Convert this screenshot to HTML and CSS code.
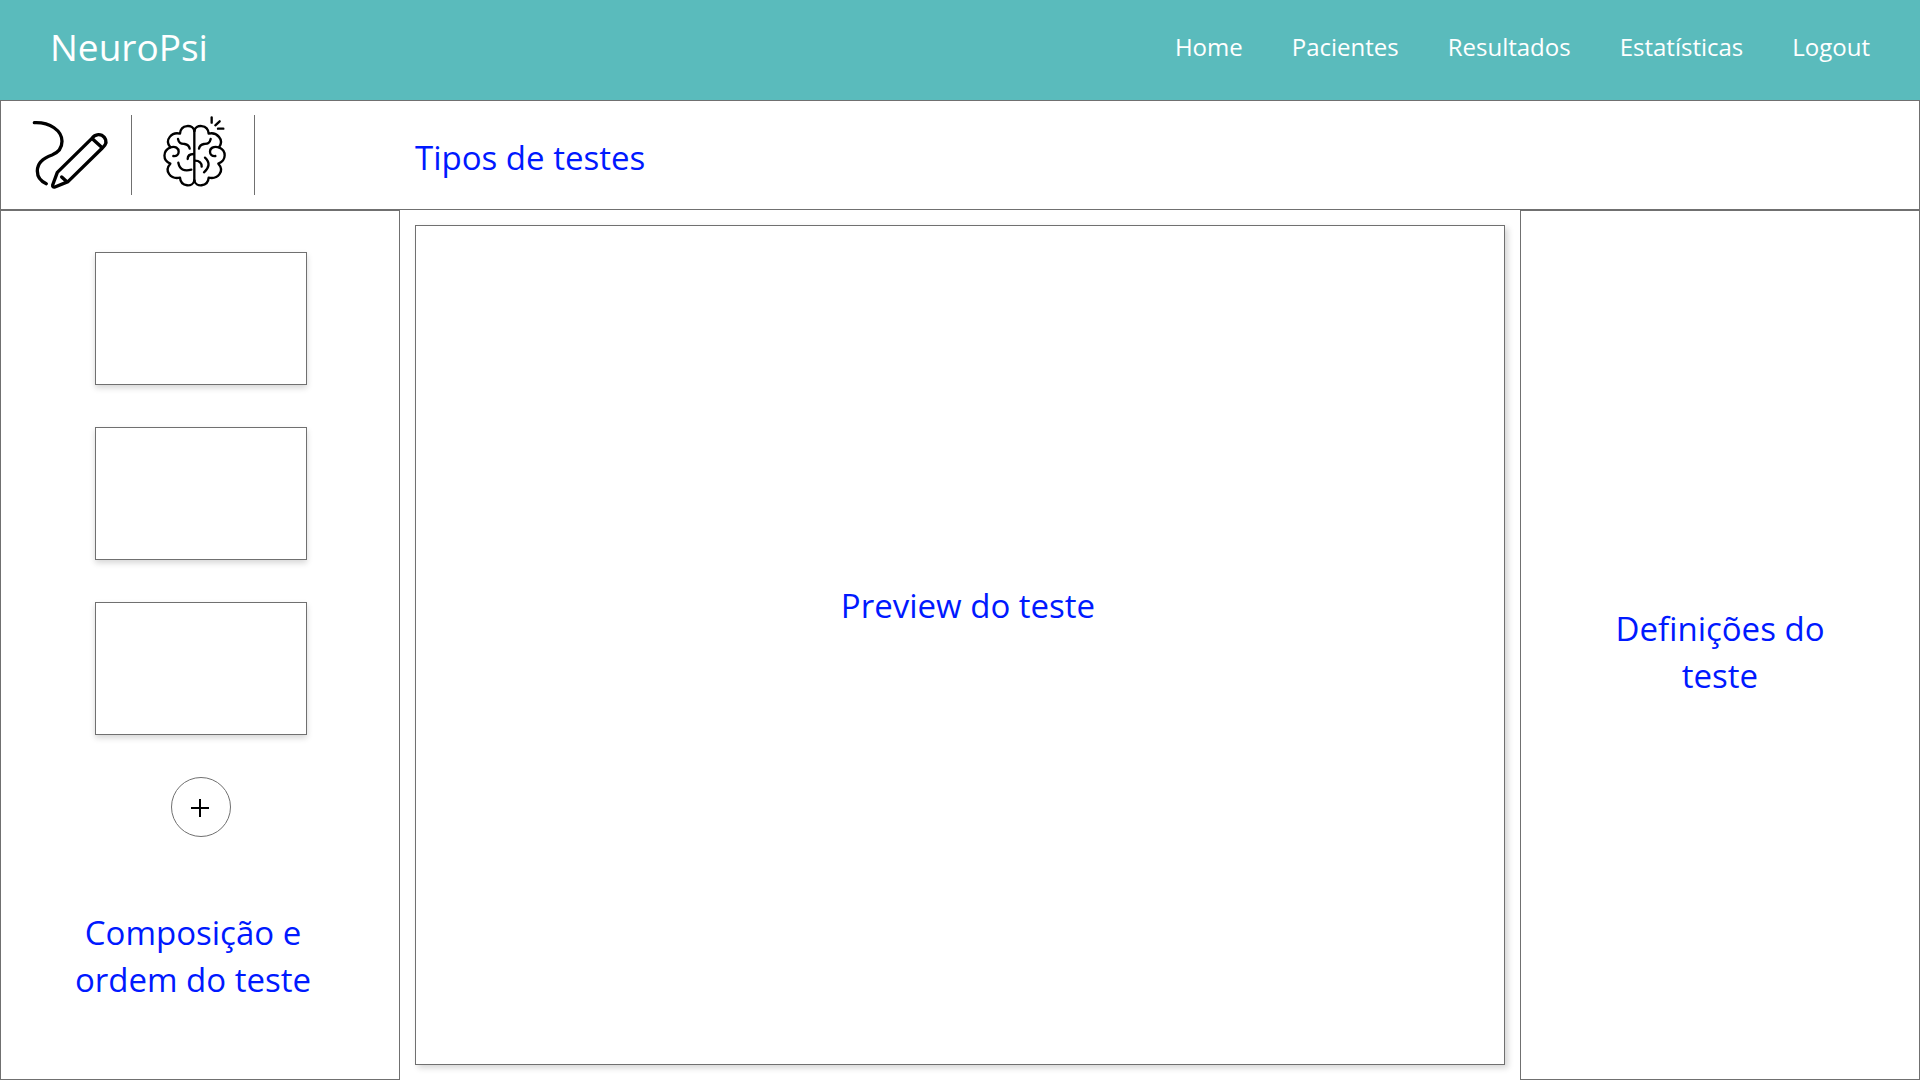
FILE: index.html
```html
<!DOCTYPE html>
<html lang="pt">
<head>
  <meta charset="utf-8">
  <meta name="viewport" content="width=device-width, initial-scale=1">
  <title>NeuroPsi</title>
  <link rel="stylesheet" href="styles.css">
</head>
<body>
  <header class="header">
    <a class="brand" href="#">NeuroPsi</a>
    <nav class="nav">
      <a class="nav-link" href="#">Home</a>
      <a class="nav-link" href="#">Pacientes</a>
      <a class="nav-link" href="#">Resultados</a>
      <a class="nav-link" href="#">Estatísticas</a>
      <a class="nav-link" href="#">Logout</a>
    </nav>
  </header>

  <section class="toolbar">
    <div class="tools">
      <button class="tool tool-draw" type="button" aria-label="Desenho">
        <svg class="tool-icon" viewBox="-12 0 300 270" fill="none" stroke="#000" stroke-width="10" stroke-linecap="round" stroke-linejoin="round">
          <path d="M43 38C90 36 126 62 126 94C126 118 114 128 96 135C70 144 52 160 52 183C52 200 63 214 79 221"/>
          <path d="M112 187L215 86C226 70 244 71 253 82C262 93 258 104 247 114L144 215L105 231Q97 233 98 225Z"/>
          <path d="M217 86L245 112M125 201L139 214"/>
        </svg>
      </button>
      <button class="tool tool-brain" type="button" aria-label="Cognição">
        <svg class="tool-icon" viewBox="-6 15 270 270" fill="none" stroke="#000" stroke-width="7" stroke-linecap="round" stroke-linejoin="round">
          <path d="M133 74V230"/>
          <path d="M133 78C130 57 92 57 90 86C66 80 42 104 61 127C38 137 37 166 61 176C41 198 62 224 90 218C92 247 130 247 133 226"/>
          <path d="M133 78C136 57 174 57 176 86C200 80 224 104 207 127C230 137 230 166 205 176C225 198 204 224 176 218C174 247 136 247 133 226"/>
          <path d="M61 127C76 122 86 130 86 140C86 149 80 154 70 153"/>
          <path d="M207 127C190 122 180 130 180 140C180 149 186 154 196 153"/>
          <path d="M84 102C87 117 95 116 104 117C113 119 118 123 119 131"/>
          <path d="M182 102C179 117 171 116 162 117C153 119 148 123 147 131"/>
          <path d="M113 162C113 152 120 147 131 147"/>
          <path d="M135 167C148 167 156 174 155 185"/>
          <path d="M85 173C89 193 102 200 124 194"/>
          <path d="M165 158C181 173 178 188 162 202"/>
          <path d="M185 37V53M196 61L209 49M204 71H220"/>
        </svg>
      </button>
    </div>
    <h1 class="label label-types">Tipos de testes</h1>
  </section>

  <main class="workspace">
    <aside class="panel panel-order">
      <button class="thumb" type="button" aria-label="Teste 1"></button>
      <button class="thumb" type="button" aria-label="Teste 2"></button>
      <button class="thumb" type="button" aria-label="Teste 3"></button>
      <button class="add" type="button" aria-label="Adicionar teste">
        <svg class="add-icon" viewBox="0 0 20 20" fill="none" stroke="#000" stroke-width="2">
          <path d="M0 11H18M9 2V20"/>
        </svg>
      </button>
      <h2 class="label label-order">Composição e<br>ordem do teste</h2>
    </aside>
    <section class="preview">
      <h2 class="label label-preview">Preview do teste</h2>
    </section>
    <aside class="panel panel-settings">
      <h2 class="label label-settings">Definições do<br>teste</h2>
    </aside>
  </main>
</body>
</html>
```
FILE: styles.css
```css
* {
  box-sizing: border-box;
}

body {
  margin: 0;
  min-height: 100vh;
  display: flex;
  flex-direction: column;
  background: #fff;
  font-family: "Open Sans", "Noto Sans", sans-serif;
}

button {
  padding: 0;
  background: #fff;
  border: 0;
  cursor: pointer;
}

.header {
  height: 100px;
  padding: 0 50px 6px;
  display: flex;
  align-items: center;
  justify-content: space-between;
  background: #5abbbc;
}

.brand,
.nav-link {
  color: #fff;
  text-decoration: none;
}

.brand {
  font-size: 37px;
  line-height: 52px;
}

.nav {
  display: flex;
  gap: 49px;
}

.nav-link {
  font-size: 24px;
  line-height: 32px;
}

.toolbar {
  height: 110px;
  display: flex;
  align-items: center;
  border: 1px solid #707070;
}

.tools {
  width: 414px;
  flex: none;
  display: flex;
}

.tool {
  height: 80px;
  display: flex;
  align-items: center;
  justify-content: center;
  border-right: 1px solid #707070;
}

.tool-draw {
  width: 131px;
}

.tool-brain {
  width: 123px;
}

.tool-icon {
  height: 90px;
  flex: none;
}

.label {
  margin: 0;
  color: #0019ff;
  font-size: 33px;
  font-weight: 400;
  line-height: 47px;
  text-align: center;
}

.label-types {
  padding-top: 4px;
}

.workspace {
  flex: 1;
  display: grid;
  grid-template-columns: 400px 1fr 400px;
}

.panel {
  display: flex;
  flex-direction: column;
  align-items: center;
  border: 1px solid #707070;
}

.panel-order {
  gap: 42px;
  padding: 41px 0 41px 2px;
}

.thumb {
  width: 212px;
  height: 133px;
  border: 1px solid #707070;
  box-shadow: 0 3px 6px rgba(0, 0, 0, 0.16);
}

.add {
  width: 60px;
  height: 60px;
  display: flex;
  align-items: center;
  justify-content: center;
  border: 1px solid #707070;
  border-radius: 50%;
}

.add-icon {
  width: 20px;
  height: 20px;
}

.label-order {
  padding: 30px 16px 0 0;
}

.preview {
  margin: 15px;
  display: flex;
  align-items: center;
  justify-content: center;
  border: 1px solid #707070;
  box-shadow: 3px 3px 6px rgba(0, 0, 0, 0.16);
}

.label-preview {
  padding: 0 0 80px 16px;
}

.panel-settings {
  justify-content: center;
}

.label-settings {
  padding-top: 14px;
}
```
